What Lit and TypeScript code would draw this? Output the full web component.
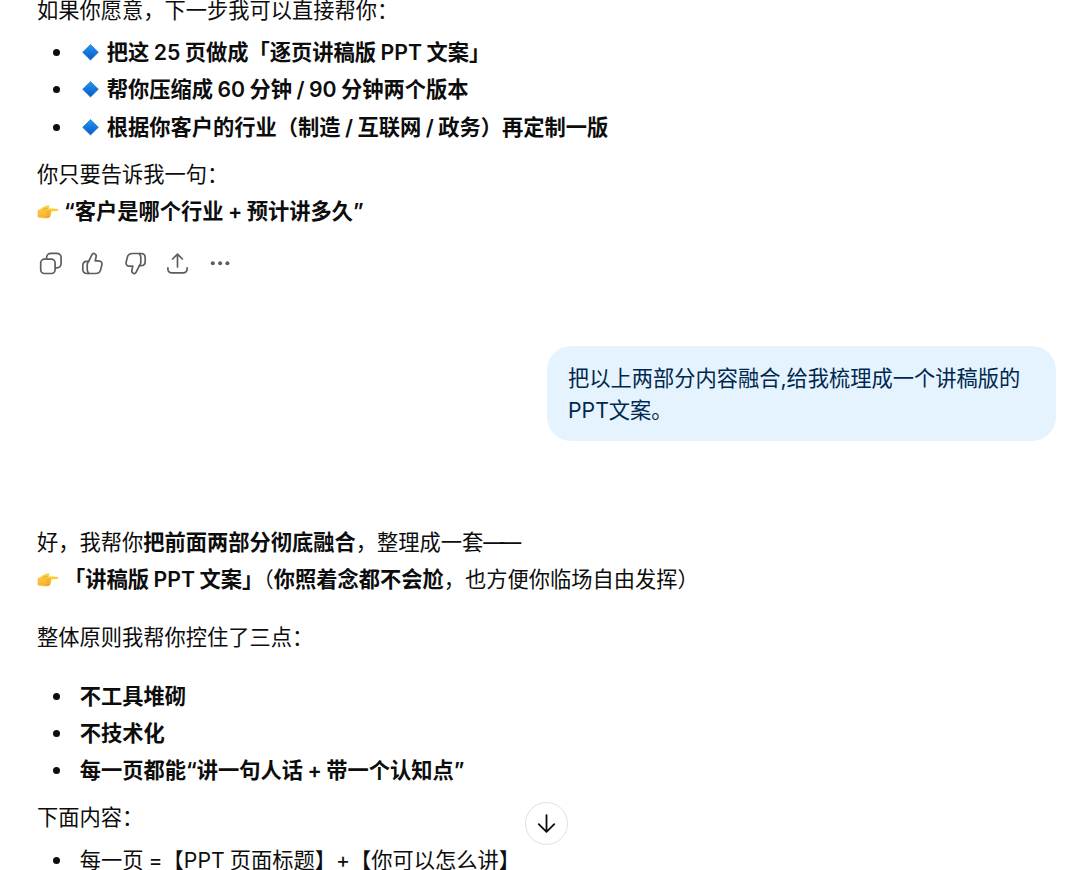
import { LitElement, css, html, svg } from 'lit'
import { customElement, property } from 'lit/decorators.js'

const icons = {
  copy: svg`
    <rect x="3.7" y="9.2" width="14.4" height="14.3" rx="3.7" />
    <path d="M9.6 8.8V7.6a4.2 4.2 0 0 1 4.2-4.2h6.1a4.2 4.2 0 0 1 4.2 4.2v6a4.2 4.2 0 0 1-4.2 4.2h-1.2" />
  `,
  up: svg`
    <path d="M9.6 11.3 13 4.6c.5-1 1.3-1.4 2.2-1.1 1.6.5 2.3 1.8 1.9 3.4l-.9 4h3.4c2.4 0 3.8 1.8 3.2 4.1l-1.1 4.6c-.7 2.6-2.4 3.9-5 3.9H8.1c-2.7 0-4.3-1.6-4.3-4.2v-3.700c0-2.600 1.600-4.300 4.300-4.300h1.500Z" />
    <path d="M9.6 11.3v.1c-1 .9-1.4 2.1-1.4 3.7v4.2c0 1.8.5 3.1 1.6 4.1" />
  `,
  down: svg`
    <path d="M17.4 15.7 14 22.4c-.5 1-1.3 1.4-2.2 1.1-1.6-.5-2.3-1.8-1.9-3.4l.9-4H7.4c-2.4 0-3.8-1.8-3.2-4.1l1.1-4.6c.7-2.6 2.4-3.9 5-3.9h8.600c2.700 0 4.300 1.600 4.300 4.200v3.700c0 2.600-1.600 4.300-4.300 4.300h-1.500Z" />
    <path d="M17.4 15.7v-.1c1-.9 1.4-2.1 1.4-3.7V7.7c0-1.8-.5-3.1-1.6-4.1" />
  `,
  share: svg`
    <path d="M13.5 17V4.3M8.6 9l4.9-4.9L18.4 9" />
    <path d="M3.9 17.8v1.4a3.7 3.7 0 0 0 3.7 3.7h11.8a3.7 3.7 0 0 0 3.7-3.7v-1.4" />
  `,
  more: svg`
    <g fill="currentColor" stroke="none">
      <circle cx="5.8" cy="13.2" r="2" />
      <circle cx="13.1" cy="13.2" r="2" />
      <circle cx="20.4" cy="13.2" r="2" />
    </g>
  `,
}

@customElement('action-icon')
export class ActionIcon extends LitElement {
  @property({ type: String })
  name: keyof typeof icons = 'copy'

  render() {
    return html`<svg viewBox="0 0 27 27">${icons[this.name]}</svg>`
  }

  static styles = css`
    :host {
      display: block;
      width: 27px;
      height: 27px;
    }

    svg {
      display: block;
      width: 100%;
      height: 100%;
      fill: none;
      stroke: currentColor;
      stroke-width: 1.7;
      stroke-linecap: round;
      stroke-linejoin: round;
    }
  `
}

@customElement('app-root')
export class AppRoot extends LitElement {
  private diamond() {
    return html`<svg class="emoji" viewBox="0 0 22 22">
      <defs>
        <linearGradient id="blue" x1="0" y1="0" x2="0" y2="1">
          <stop offset="0" stop-color="#2e93ee" />
          <stop offset="0.5" stop-color="#1478dc" />
          <stop offset="1" stop-color="#0759ba" />
        </linearGradient>
      </defs>
      <path d="M10.5 2.5 18.4 10.3 10.5 18.1 2.6 10.3Z" fill="url(#blue)" stroke="#0f6fd0" stroke-width="0.6" />
    </svg>`
  }

  private pointer() {
    return html`<svg class="emoji" viewBox="0 0 22 22">
      <defs>
        <linearGradient id="skin" x1="0" y1="0" x2="0" y2="1">
          <stop offset="0" stop-color="#ffd546" />
          <stop offset="1" stop-color="#f9b02c" />
        </linearGradient>
      </defs>
      <path
        d="M.7 9.3c1.8-.6 3-1.4 4.5-2.6C6.7 5.5 8.5 4.7 10.7 4.4c1.4-.2 2.1.4 1.8 1.3-.2.7-.9 1.1-1.9 1.5l9.5.5c1.4.1 1.5 2.2 0 2.4l-6.5.5c.9.6.9 1.7.1 2.3.5.9.2 1.8-.6 2.2.2 1-.5 1.7-1.6 1.9-2.4.4-5.3.4-7.4-.2-1.2-.3-2.2-.4-3.4-.3Z"
        fill="url(#skin)"
      />
      <path
        d="M9.2 10.6h4.3M9.3 13h4.2M9.2 15.3h3.6M6.5 8.6c1.3-.2 2.6-.7 4-1.3"
        fill="none"
        stroke="#e0901f"
        stroke-width="0.6"
        stroke-linecap="round"
      />
    </svg>`
  }

  render() {
    return html`
      <main class="thread">
        <section>
          <p>如果你愿意，下一步我可以直接帮你：</p>
          <ul class="tight">
            <li>${this.diamond()} <b>把这 25 页做成「逐页讲稿版 PPT 文案」</b></li>
            <li>${this.diamond()} <b>帮你压缩成 60 分钟 / 90 分钟两个版本</b></li>
            <li>${this.diamond()} <b>根据你客户的行业（制造 / 互联网 / 政务）再定制一版</b></li>
          </ul>
          <p>你只要告诉我一句：<br />${this.pointer()} <b>“客户是哪个行业 + 预计讲多久”</b></p>
          <div class="actions">
            ${(['copy', 'up', 'down', 'share', 'more'] as const).map(
              (name) => html`<action-icon name=${name}></action-icon>`
            )}
          </div>
        </section>

        <div class="bubble">把以上两部分内容融合,给我梳理成一个讲稿版的PPT文案。</div>

        <section>
          <p>
            好，我帮你<b>把前面两部分彻底融合</b>，整理成一套<span class="dash">——</span><br />${this.pointer()}
            <b>「讲稿版 PPT 文案」</b>（<b>你照着念都不会尬</b>，也方便你临场自由发挥）
          </p>
          <p class="spaced">整体原则我帮你控住了三点：</p>
          <ul class="spaced">
            <li><b>不工具堆砌</b></li>
            <li><b>不技术化</b></li>
            <li><b>每一页都能“讲一句人话 + 带一个认知点”</b></li>
          </ul>
          <p>下面内容：</p>
          <ul class="tight">
            <li>每一页 =【PPT 页面标题】+【你可以怎么讲】</li>
          </ul>
        </section>
      </main>

      <button class="scroll-btn" title="Scroll to bottom">
        <svg viewBox="0 0 24 24"><path d="M12 3.2v17.5M3.9 12.7 12 20.8l8.1-8.1" /></svg>
      </button>
    `
  }

  static styles = css`
    :host {
      display: block;
      position: relative;
      height: 870px;
      overflow: hidden;
      background: #fff;
      color: #0d0d0d;
      font-family: Inter, 'Noto Sans CJK SC', sans-serif;
      font-size: 21.25px;
      line-height: 37.3px;
      word-spacing: -0.9px;
    }

    .thread {
      display: flex;
      flex-direction: column;
      margin-top: -8.4px;
      padding: 0 24px 0 37px;
    }

    p,
    ul {
      margin: 0;
      white-space: nowrap;
    }

    ul {
      padding-left: 42.7px;
      margin-bottom: 10px;
      list-style: none;
    }

    li::before {
      content: '';
      display: inline-block;
      width: 7px;
      height: 7px;
      margin: 0 19.5px 0 -26.5px;
      border-radius: 50%;
      background: currentColor;
      vertical-align: 4px;
    }

    .tight {
      margin-top: 5.2px;
    }

    .spaced {
      margin-top: 21px;
    }

    b {
      font-weight: 600;
    }

    .dash {
      letter-spacing: -4.5px;
    }

    .emoji {
      display: inline-block;
      width: 22px;
      height: 22px;
      vertical-align: -4px;
    }

    .actions {
      display: flex;
      gap: 15.6px;
      margin: 19.4px 0 0 -0.3px;
      color: #5d5d5d;
    }

    .bubble {
      box-sizing: border-box;
      width: 509px;
      height: 95px;
      margin: 69.3px 0 82.4px;
      padding: 16px 21px;
      align-self: flex-end;
      border-radius: 24px;
      background: #e5f3ff;
      color: #00284d;
      line-height: 32px;
    }

    .scroll-btn {
      position: absolute;
      left: 525px;
      top: 802px;
      display: flex;
      align-items: center;
      justify-content: center;
      width: 43px;
      height: 43px;
      padding: 0;
      border: 1px solid #e0e0e0;
      border-radius: 50%;
      background: #fff;
      color: #0d0d0d;
    }

    .scroll-btn svg {
      width: 23px;
      height: 23px;
      fill: none;
      stroke: currentColor;
      stroke-width: 1.9;
      stroke-linecap: round;
      stroke-linejoin: round;
    }
  `
}

declare global {
  interface HTMLElementTagNameMap {
    'action-icon': ActionIcon
    'app-root': AppRoot
  }
}
